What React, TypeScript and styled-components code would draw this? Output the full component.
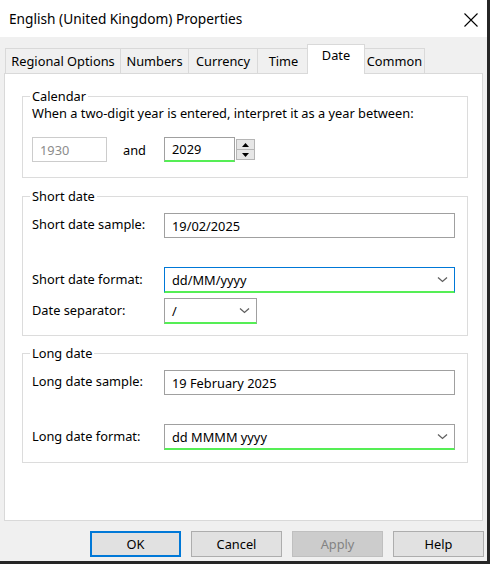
import React from "react";
import styled, { createGlobalStyle, css } from "styled-components";

const FONT = `"Noto Sans", "Open Sans", "Liberation Sans", sans-serif`;
const BASE = "12.8px";

const GlobalStyle = createGlobalStyle`
  html, body { margin: 0; padding: 0; background: #262626; }
  body { width: 490px; height: 564px; overflow: hidden; font-family: ${FONT}; }
`;

const Window = styled.div`
  width: 487px;
  height: 561px;
  background: #f0f0f0;
  display: flex;
  flex-direction: column;
  font-family: ${FONT};
  font-size: ${BASE};
  color: #000;
`;

const TitleBar = styled.div`
  box-sizing: border-box;
  height: 37px;
  flex: 0 0 37px;
  background: #fff;
  display: flex;
  align-items: center;
  justify-content: space-between;
  padding: 0 9px 0 9px;
`;

const Title = styled.div`
  font-size: 13.7px;
  line-height: 16px;
  margin-top: 1px;
`;

const CloseGlyph = styled.svg`
  display: block;
  width: 14px;
  height: 14px;
  margin-top: 2px;
`;

const TabStrip = styled.div`
  height: 36px;
  flex: 0 0 36px;
  display: flex;
  align-items: flex-end;
  padding-left: 5px;
`;

const Tab = styled.div<{ $w: number; $active?: boolean; $ml: number }>`
  box-sizing: border-box;
  width: ${(p) => p.$w}px;
  height: 25px;
  margin-left: ${(p) => p.$ml}px;
  border: 1px solid #d9d9d9;
  border-bottom: none;
  background: #f0f0f0;
  display: flex;
  align-items: center;
  justify-content: center;
  line-height: 15px;
  white-space: nowrap;
  ${(p) =>
    p.$active &&
    css`
      height: 30px;
      background: #fff;
      margin-bottom: -1px;
      padding-bottom: 9px;
      position: relative;
      z-index: 1;
    `}
`;

const Panel = styled.div`
  box-sizing: border-box;
  height: 448px;
  flex: 0 0 448px;
  margin: 0 4px;
  background: #fff;
  border: 1px solid #d9d9d9;
  padding: 15px 14px 0 17px;
  display: flex;
  flex-direction: column;
`;

const Group = styled.fieldset<{ $mt: number; $pb: number }>`
  margin: ${(p) => p.$mt}px 0 0 0;
  padding: 0 0 ${(p) => p.$pb}px 9px;
  border: 1px solid #dcdcdc;
  min-width: 0;
`;

const Legend = styled.legend`
  padding: 0 2px;
  margin-left: -2px;
  line-height: 14px;
  font-size: ${BASE};
`;

const Description = styled.div`
  margin-top: 2px;
  line-height: 16px;
`;

const Row = styled.div<{ $mt: number }>`
  display: flex;
  align-items: center;
  margin-top: ${(p) => p.$mt}px;
`;

const Label = styled.div`
  flex: 0 0 132px;
  line-height: 16px;
  margin-top: -3px;
`;

const AndText = styled.div`
  flex: 0 0 57px;
  box-sizing: border-box;
  padding-left: 16px;
  line-height: 16px;
`;

const TextBox = styled.div<{ $w: number; $h?: number; $disabled?: boolean; $green?: boolean }>`
  box-sizing: border-box;
  width: ${(p) => p.$w}px;
  height: ${(p) => p.$h ?? 25}px;
  border: 1px solid ${(p) => (p.$disabled ? "#cccccc" : "#a0a0a0")};
  ${(p) => p.$green && css`border-bottom: 2px solid #55ee55;`}
  background: #fff;
  color: ${(p) => (p.$disabled ? "#8c8c8c" : "#000")};
  display: flex;
  align-items: center;
  padding-left: 7px;
  line-height: 16px;
`;

const SpinField = styled.div`
  display: flex;
  align-items: center;
  height: 25px;
`;

const SpinStack = styled.div`
  display: flex;
  flex-direction: column;
  margin-left: 1px;
`;

const SpinButton = styled.div`
  box-sizing: border-box;
  width: 19px;
  height: 11px;
  background: #e6e6e6;
  border: 1px solid #b5b5b5;
  display: flex;
  align-items: center;
  justify-content: center;
  & + & { border-top: none; height: 10px; }
`;

const Combo = styled.div<{ $w: number; $focused?: boolean }>`
  box-sizing: border-box;
  width: ${(p) => p.$w}px;
  height: 26px;
  border: 1px solid ${(p) => (p.$focused ? "#0078d7" : "#a0a0a0")};
  border-bottom: 2px solid #55ee55;
  background: #fff;
  display: flex;
  align-items: center;
  justify-content: space-between;
  padding: 0 6px 0 7px;
  line-height: 16px;
`;

const Chevron = styled.svg`
  display: block;
  width: 11px;
  height: 7px;
`;

const ButtonRow = styled.div`
  display: flex;
  justify-content: flex-end;
  gap: 10px;
  margin-top: 10px;
  padding-right: 3px;
`;

const Button = styled.button<{ $default?: boolean }>`
  box-sizing: border-box;
  width: 91px;
  height: 26px;
  font-family: ${FONT};
  font-size: ${BASE};
  color: #000;
  background: #e1e1e1;
  border: 1px solid #adadad;
  padding: 0;
  ${(p) =>
    p.$default &&
    css`
      border-color: #0078d7;
      box-shadow: inset 0 0 0 1px #0078d7;
    `}
  &:disabled {
    background: #cccccc;
    border-color: #bfbfbf;
    color: #838383;
  }
`;

const ChevronIcon = () => (
  <Chevron viewBox="0 0 11 7">
    <polyline points="1,1.5 5.5,5.5 10,1.5" fill="none" stroke="#606060" strokeWidth="1.3" />
  </Chevron>
);

const Arrow = ({ up }: { up?: boolean }) => (
  <svg width="7" height="4" viewBox="0 0 7 4" style={{ display: "block" }}>
    <polygon points={up ? "0,4 7,4 3.5,0" : "0,0 7,0 3.5,4"} fill="#000" />
  </svg>
);

const tabs = [
  { label: "Regional Options", w: 116 },
  { label: "Numbers", w: 69 },
  { label: "Currency", w: 70 },
  { label: "Time", w: 53 },
  { label: "Date", w: 58, active: true },
  { label: "Common", w: 61 },
];

export default function App() {
  return (
    <>
      <GlobalStyle />
      <Window>
        <TitleBar>
          <Title>English (United Kingdom) Properties</Title>
          <CloseGlyph viewBox="0 0 14 14">
            <path d="M0.5 0.5 L13.5 13.5 M13.5 0.5 L0.5 13.5" stroke="#000" strokeWidth="1.1" fill="none" />
          </CloseGlyph>
        </TitleBar>
        <TabStrip>
          {tabs.map((t, i) => (
            <Tab key={t.label} $w={t.w} $active={t.active} $ml={i === 0 ? 0 : t.active ? -3 : -1}>
              {t.label}
            </Tab>
          ))}
        </TabStrip>
        <Panel>
          <Group $mt={0} $pb={15}>
            <Legend>Calendar</Legend>
            <Description>When a two-digit year is entered, interpret it as a year between:</Description>
            <Row $mt={16}>
              <TextBox $w={75} $disabled>1930</TextBox>
              <AndText>and</AndText>
              <SpinField>
                <TextBox $w={71} $green>2029</TextBox>
                <SpinStack>
                  <SpinButton><Arrow up /></SpinButton>
                  <SpinButton><Arrow /></SpinButton>
                </SpinStack>
              </SpinField>
            </Row>
          </Group>

          <Group $mt={11} $pb={11}>
            <Legend>Short date</Legend>
            <Row $mt={10}>
              <Label>Short date sample:</Label>
              <TextBox $w={291}>19/02/2025</TextBox>
            </Row>
            <Row $mt={29}>
              <Label>Short date format:</Label>
              <Combo $w={291} $focused>
                <span>dd/MM/yyyy</span>
                <ChevronIcon />
              </Combo>
            </Row>
            <Row $mt={5}>
              <Label>Date separator:</Label>
              <Combo $w={93}>
                <span>/</span>
                <ChevronIcon />
              </Combo>
            </Row>
          </Group>

          <Group $mt={10} $pb={12}>
            <Legend>Long date</Legend>
            <Row $mt={10}>
              <Label>Long date sample:</Label>
              <TextBox $w={291}>19 February 2025</TextBox>
            </Row>
            <Row $mt={29}>
              <Label>Long date format:</Label>
              <Combo $w={291}>
                <span>dd MMMM yyyy</span>
                <ChevronIcon />
              </Combo>
            </Row>
          </Group>
        </Panel>
        <ButtonRow>
          <Button $default>OK</Button>
          <Button>Cancel</Button>
          <Button disabled>Apply</Button>
          <Button>Help</Button>
        </ButtonRow>
      </Window>
    </>
  );
}
